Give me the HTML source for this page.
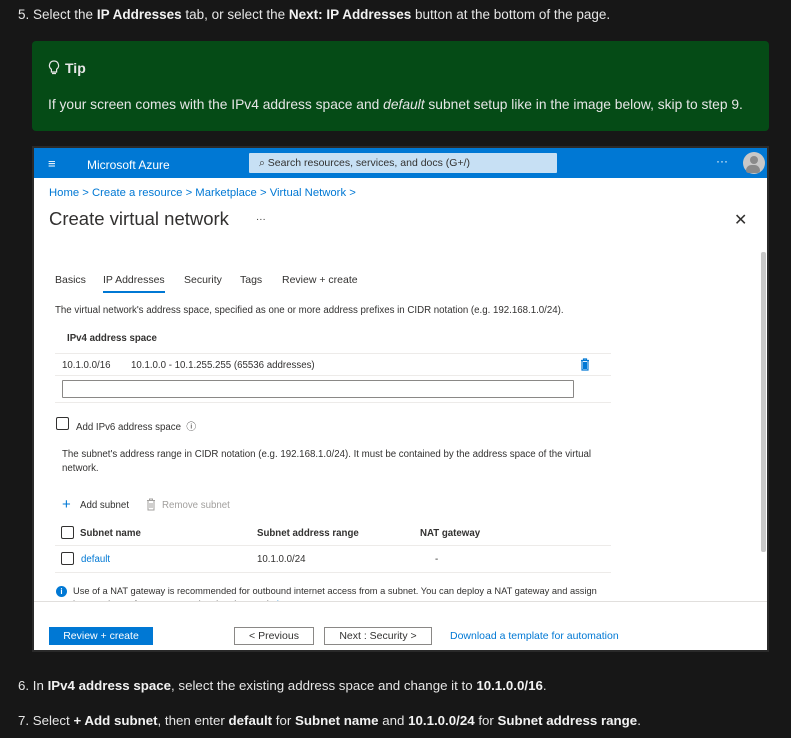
<!DOCTYPE html>
<html><head><meta charset="utf-8"><style>
*{margin:0;padding:0;box-sizing:border-box}
body{width:791px;height:738px;background:#171717;font-family:"Liberation Sans",sans-serif;color:#e6e6e6;position:relative;overflow:hidden}
.a{position:absolute;white-space:nowrap}
.t{font-size:13.5px}
b{font-weight:bold;color:#f2f2f2}
.img{position:absolute;left:32px;top:146px;width:737px;height:506px;background:#fff;border:2px solid #2a2a2a;overflow:hidden}
.img .a{color:#323130}
.s{font-size:9.7px}
.m{font-size:10.5px}
.blue{color:#0078d4 !important}
.line{position:absolute;height:1px;background:#edebe9}
.cb{position:absolute;width:13px;height:13px;border:1px solid #323130;border-radius:2px;background:#fff}
.btn{position:absolute;height:18px;border:1px solid #8a8886;font-size:10.5px;text-align:center;line-height:16px;color:#323130;background:#fff}
</style></head><body>
<div class="a t" style="left:18px;top:7px">5. Select the <b>IP Addresses</b> tab, or select the <b>Next: IP Addresses</b> button at the bottom of the page.</div>
<div style="position:absolute;left:32px;top:41px;width:737px;height:90px;background:#054b16;border-radius:4px"></div>
<svg class="a" style="left:48px;top:60px" width="12" height="15" viewBox="0 0 12 15"><path d="M6 1a4.5 4.5 0 0 0-2.6 8.2V12h5.2V9.2A4.5 4.5 0 0 0 6 1z M4 13.5h4" fill="none" stroke="#e6e6e6" stroke-width="1.2"/></svg>
<div class="a t" style="left:65px;top:60px;font-weight:bold;font-size:14px">Tip</div>
<div class="a" style="left:48px;top:97px;font-size:13.8px">If your screen comes with the IPv4 address space and <i>default</i> subnet setup like in the image below, skip to step 9.</div>

<div class="img">
<div style="position:absolute;left:0;top:0;width:100%;height:30px;background:#0078d4"></div>
<div class="a" style="left:14px;top:8px;font-size:13px;color:#fff !important">≡</div>
<div class="a" style="left:53px;top:10px;font-size:12px;color:#fff !important">Microsoft Azure</div>
<div style="position:absolute;left:215px;top:5px;width:308px;height:20px;background:#c7e0f4;border-radius:1px"></div>
<div class="a m" style="left:225px;top:9px;color:#323130">⌕ Search resources, services, and docs (G+/)</div>
<div class="a" style="left:682px;top:6px;color:#fff !important;font-size:12px">···</div>
<div style="position:absolute;left:709px;top:4px;width:22px;height:22px;border-radius:50%;background:#c8c8c8"></div>
<div style="position:absolute;left:716px;top:8px;width:8px;height:8px;border-radius:50%;background:#8a8a8a"></div>
<div style="position:absolute;left:712px;top:17px;width:14px;height:8px;border-radius:7px 7px 3px 3px;background:#8a8a8a"></div>

<div class="a blue" style="left:15px;top:39px;font-size:11.3px">Home &gt; Create a resource &gt; Marketplace &gt; Virtual Network &gt;</div>
<div class="a" style="left:15px;top:60px;font-size:18.5px">Create virtual network</div>
<div class="a s" style="left:222px;top:66px">···</div>
<div class="a" style="left:700px;top:62px;font-size:16px">✕</div>
<div style="position:absolute;left:727px;top:104px;width:5px;height:300px;background:#c8c8c8;border-radius:2px"></div>

<div class="a m" style="left:21px;top:126px">Basics</div>
<div class="a m" style="left:69px;top:126px">IP Addresses</div>
<div style="position:absolute;left:69px;top:143px;width:62px;height:2px;background:#0078d4"></div>
<div class="a m" style="left:150px;top:126px">Security</div>
<div class="a m" style="left:206px;top:126px">Tags</div>
<div class="a m" style="left:248px;top:126px">Review + create</div>

<div class="a s" style="left:21px;top:157px">The virtual network's address space, specified as one or more address prefixes in CIDR notation (e.g. 192.168.1.0/24).</div>
<div class="a s" style="left:33px;top:185px;font-weight:bold;color:#323130">IPv4 address space</div>
<div class="line" style="left:21px;top:205px;width:556px"></div>
<div class="a s" style="left:28px;top:212px">10.1.0.0/16</div>
<div class="a s" style="left:97px;top:212px">10.1.0.0 - 10.1.255.255 (65536 addresses)</div>
<svg class="a" style="left:546px;top:210px" width="10" height="13"><path d="M1 2.5h8M3.5 2.5V1h3v1.5M2 3v9h6V3" fill="none" stroke="#0078d4" stroke-width="1.2"/><rect x="3" y="4" width="4" height="7" fill="#0078d4"/></svg>
<div class="line" style="left:21px;top:227px;width:556px"></div>
<div style="position:absolute;left:28px;top:232px;width:512px;height:18px;border:1px solid #8a8886;border-radius:1px"></div>
<div class="line" style="left:21px;top:254px;width:556px"></div>

<div class="cb" style="left:22px;top:269px"></div>
<div class="a s" style="left:42px;top:271px">Add IPv6 address space &nbsp;ⓘ</div>
<div class="a s" style="left:28px;top:301px">The subnet's address range in CIDR notation (e.g. 192.168.1.0/24). It must be contained by the address space of the virtual</div>
<div class="a s" style="left:28px;top:315px">network.</div>

<div class="a blue" style="left:28px;top:348px;font-size:15px">+</div>
<div class="a s" style="left:46px;top:352px">Add subnet</div>
<svg class="a" style="left:112px;top:350px" width="10" height="13"><path d="M1 2.5h8M3.5 2.5V1h3v1.5M2 3v9h6V3M4 5v5M6 5v5" fill="none" stroke="#a19f9d" stroke-width="1"/></svg>
<div class="a s" style="left:128px;top:352px;color:#a19f9d !important">Remove subnet</div>

<div class="cb" style="left:27px;top:378px"></div>
<div class="a s" style="left:46px;top:380px;font-weight:bold">Subnet name</div>
<div class="a s" style="left:223px;top:380px;font-weight:bold">Subnet address range</div>
<div class="a s" style="left:386px;top:380px;font-weight:bold">NAT gateway</div>
<div class="line" style="left:21px;top:397px;width:556px"></div>
<div class="cb" style="left:27px;top:404px"></div>
<div class="a s blue" style="left:47px;top:406px">default</div>
<div class="a s" style="left:223px;top:406px">10.1.0.0/24</div>
<div class="a s" style="left:401px;top:406px">-</div>
<div class="line" style="left:21px;top:424px;width:556px"></div>

<div style="position:absolute;left:22px;top:438px;width:11px;height:11px;border-radius:50%;background:#0078d4;color:#fff;font-size:8px;font-weight:bold;text-align:center;line-height:11px">i</div>
<div class="a" style="left:39px;top:438px;font-size:9.3px">Use of a NAT gateway is recommended for outbound internet access from a subnet. You can deploy a NAT gateway and assign</div>
<div class="a" style="left:39px;top:451px;font-size:9.3px">it to a subnet after you create the virtual network. <span style="color:#0078d4">Learn more ↗</span></div>
<div style="position:absolute;left:0;top:453px;width:100%;height:60px;background:#fff;border-top:1px solid #e1dfdd"></div>

<div class="btn" style="left:15px;top:479px;width:104px;background:#0078d4;border-color:#0078d4;color:#fff">Review + create</div>
<div class="btn" style="left:200px;top:479px;width:80px">&lt; Previous</div>
<div class="btn" style="left:290px;top:479px;width:108px">Next : Security &gt;</div>
<div class="a m blue" style="left:416px;top:482px">Download a template for automation</div>
</div>

<div class="a" style="left:18px;top:678px;font-size:13.3px">6. In <b>IPv4 address space</b>, select the existing address space and change it to <b>10.1.0.0/16</b>.</div>
<div class="a" style="left:18px;top:713px;font-size:13.3px">7. Select <b>+ Add subnet</b>, then enter <b>default</b> for <b>Subnet name</b> and <b>10.1.0.0/24</b> for <b>Subnet address range</b>.</div>
</body></html>
